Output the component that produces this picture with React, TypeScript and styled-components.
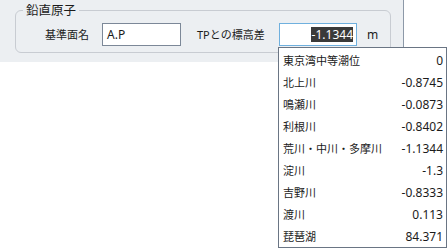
import { createGlobalStyle } from 'styled-components';
import styled from 'styled-components';

const GlobalStyle = createGlobalStyle`
  html, body {
    margin: 0;
    padding: 0;
    background: #ffffff;
  }
  body {
    font-family: "Noto Sans", "Noto Sans CJK JP", sans-serif;
    color: #1b1b1b;
  }
`;

const Page = styled.div`
  position: relative;
  width: 448px;
  height: 249px;
  overflow: hidden;
`;

const Panel = styled.div`
  width: 404px;
  height: 62px;
  box-sizing: border-box;
  padding: 10px 0 0 15px;
  background: #eceff2;
  border-right: 1px solid #8d99a8;
`;

const GroupBox = styled.div`
  position: relative;
  width: 376px;
  height: 43px;
  box-sizing: border-box;
  border: 1px solid #c8ccd2;
  border-radius: 6px;
  padding: 12px 0 0 29px;
  display: flex;
  align-items: flex-start;
`;

const Legend = styled.span`
  position: absolute;
  top: -9px;
  left: 7px;
  padding: 0 3px;
  background: #eceff2;
  font-family: "Noto Sans CJK JP", sans-serif;
  font-size: 12.5px;
  line-height: 16px;
`;

const Row = styled.div`
  display: flex;
  align-items: center;
  height: 23px;
`;

const Label = styled.span<{ $width: number }>`
  width: ${({ $width }) => $width}px;
  flex-shrink: 0;
  font-size: 11px;
  line-height: 23px;
  white-space: nowrap;
`;

const Field = styled.div<{ $width: number; $focused?: boolean }>`
  width: ${({ $width }) => $width}px;
  height: 23px;
  box-sizing: border-box;
  flex-shrink: 0;
  display: flex;
  align-items: center;
  justify-content: ${({ $focused }) => ($focused ? 'flex-end' : 'flex-start')};
  padding: ${({ $focused }) => ($focused ? '0 3px 0 4px' : '0 4px 0 4px')};
  background: #ffffff;
  border: 1px solid ${({ $focused }) => ($focused ? '#6fb0de' : '#7c8898')};
  font-size: 12px;
  line-height: 15px;
`;

const Selected = styled.span`
  background: #3a3a3a;
  color: #ffffff;
  padding: 0 0 0 1px;
  line-height: 15px;
`;

const Unit = styled.span`
  margin-left: 10px;
  font-size: 12px;
`;

const Spacer = styled.span<{ $width: number }>`
  width: ${({ $width }) => $width}px;
  flex-shrink: 0;
`;

const Dropdown = styled.ul`
  position: absolute;
  left: 278px;
  top: 47px;
  width: 169px;
  height: 201px;
  box-sizing: border-box;
  margin: 0;
  padding: 1px 0 0;
  list-style: none;
  background: #ffffff;
  border: 1px solid #6a7584;
`;

const Item = styled.li`
  height: 22px;
  display: flex;
  align-items: center;
  justify-content: space-between;
  padding: 0 3px 0 4px;
`;

const Name = styled.span`
  font-family: "Noto Sans CJK JP", sans-serif;
  font-size: 11px;
  white-space: nowrap;
`;

const Value = styled.span`
  font-size: 12px;
`;

const datums: [string, string][] = [
  ['東京湾中等潮位', '0'],
  ['北上川', '-0.8745'],
  ['鳴瀬川', '-0.0873'],
  ['利根川', '-0.8402'],
  ['荒川・中川・多摩川', '-1.1344'],
  ['淀川', '-1.3'],
  ['吉野川', '-0.8333'],
  ['渡川', '0.113'],
  ['琵琶湖', '84.371'],
];

export default function App() {
  return (
    <Page>
      <GlobalStyle />
      <Panel>
        <GroupBox>
          <Legend>鉛直原子</Legend>
          <Row>
            <Label $width={57}>基準面名</Label>
            <Field $width={79}>A.P</Field>
            <Spacer $width={16} />
            <Label $width={82}>TPとの標高差</Label>
            <Field $width={78} $focused>
              <Selected>-1.1344</Selected>
            </Field>
            <Unit>m</Unit>
          </Row>
        </GroupBox>
      </Panel>
      <Dropdown>
        {datums.map(([name, value]) => (
          <Item key={name}>
            <Name>{name}</Name>
            <Value>{value}</Value>
          </Item>
        ))}
      </Dropdown>
    </Page>
  );
}
